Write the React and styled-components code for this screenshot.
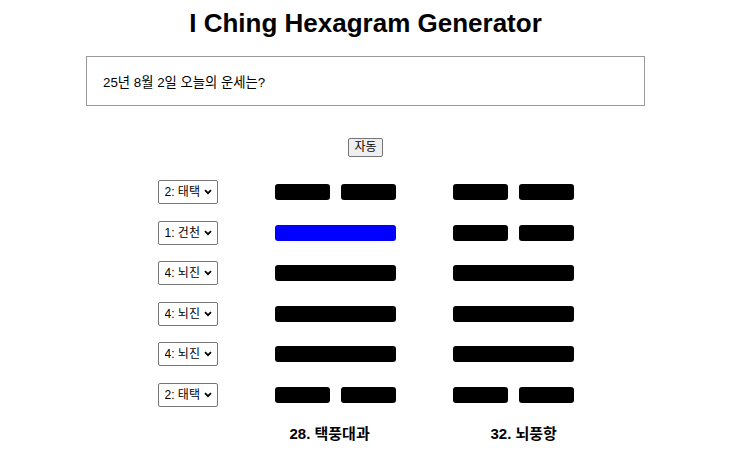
import React, { useState } from "react";
import styled, { createGlobalStyle } from "styled-components";

const GlobalStyle = createGlobalStyle`
  html, body { margin: 0; padding: 0; background: #fff; }
  body { font-family: "Liberation Sans", Arial, "Noto Sans CJK KR", sans-serif; color: #000; }
`;

const Page = styled.div`
  width: 731px;
  display: flex;
  flex-direction: column;
  align-items: center;
`;

const Title = styled.h1`
  margin: 8px 0 0;
  font-size: 26px;
  line-height: 30px;
  font-weight: bold;
`;

const Question = styled.input`
  box-sizing: border-box;
  margin-top: 18px;
  width: 559px;
  height: 50px;
  padding: 0 16px;
  border: 1px solid #9a9a9a;
  border-radius: 0;
  font-family: "Liberation Sans", Arial, "Noto Sans CJK KR", sans-serif;
  font-size: 13.33px;
  color: #000;
  outline: none;
`;

const AutoButton = styled.button`
  margin-top: 32px;
  height: 19px;
  padding: 0 5px;
  border: 1px solid #767676;
  border-radius: 2px;
  background: #efefef;
  font-family: "Liberation Sans", Arial, "Noto Sans CJK KR", sans-serif;
  font-size: 12px;
  color: #000;
  line-height: 17px;
`;

const Board = styled.div`
  margin-top: 15px;
  display: flex;
  gap: 57px;
  align-items: flex-start;
`;

const Column = styled.div`
  display: flex;
  flex-direction: column;
  align-items: center;
  width: ${(p) => p.$width}px;
`;

const Row = styled.div`
  height: 40.5px;
  width: 100%;
  display: flex;
  align-items: center;
  justify-content: center;
`;

const SelectWrap = styled.div`
  position: relative;
  width: 60px;
  height: 24px;
`;

const TrigramSelect = styled.select`
  box-sizing: border-box;
  appearance: none;
  -webkit-appearance: none;
  width: 60px;
  height: 24px;
  padding: 0 14px 0 6px;
  border: 1px solid #767676;
  border-radius: 2px;
  background: #fff;
  font-family: "Liberation Sans", Arial, "Noto Sans CJK KR", sans-serif;
  font-size: 12px;
  color: #000;
  outline: none;
`;

const Chevron = styled.svg`
  position: absolute;
  right: 6px;
  top: 9px;
  width: 8px;
  height: 6px;
  pointer-events: none;
`;

const Line = styled.div`
  width: 121px;
  height: 16px;
  display: flex;
  justify-content: space-between;
`;

const Segment = styled.div`
  flex: 0 0 ${(p) => (p.$full ? "100%" : "55px")};
  height: 100%;
  border-radius: 3px;
  background: ${(p) => (p.$active ? "#0000ff" : "#000")};
`;

const Name = styled.div`
  align-self: flex-start;
  margin: 9px 0 0 ${(p) => p.$indent}px;
  font-family: "Liberation Sans", Arial, "Noto Sans CJK KR", sans-serif;
  font-size: 15px;
  font-weight: bold;
  line-height: 20px;
  white-space: nowrap;
`;

const trigrams = ["1: 건천", "2: 태택", "3: 리화", "4: 뇌진", "5: 손풍", "6: 감수", "7: 간산", "8: 곤지"];

// lines listed top to bottom: true = yang (solid)
const left = [false, true, true, true, true, false];
const right = [false, false, true, true, true, false];

function HexLine({ yang, active }) {
  return (
    <Line>
      {yang ? (
        <Segment $full $active={active} />
      ) : (
        <>
          <Segment $active={active} />
          <Segment $active={active} />
        </>
      )}
    </Line>
  );
}

export default function App() {
  const [values, setValues] = useState(["2: 태택", "1: 건천", "4: 뇌진", "4: 뇌진", "4: 뇌진", "2: 태택"]);
  return (
    <Page>
      <GlobalStyle />
      <Title>I Ching Hexagram Generator</Title>
      <Question defaultValue="25년 8월 2일 오늘의 운세는?" />
      <AutoButton>자동</AutoButton>
      <Board>
        <Column $width={60}>
          {values.map((v, i) => (
            <Row key={i}>
              <SelectWrap>
                <TrigramSelect
                  value={v}
                  onChange={(e) => {
                    const n = [...values];
                    n[i] = e.target.value;
                    setValues(n);
                  }}
                >
                  {trigrams.map((t) => (
                    <option key={t} value={t}>
                      {t}
                    </option>
                  ))}
                </TrigramSelect>
                <Chevron viewBox="0 0 8 6">
                  <path d="M1 1.2 L4 4.2 L7 1.2" fill="none" stroke="#000" strokeWidth="1.8" />
                </Chevron>
              </SelectWrap>
            </Row>
          ))}
        </Column>
        <Column $width={121}>
          {left.map((y, i) => (
            <Row key={i}>
              <HexLine yang={y} active={i === 1} />
            </Row>
          ))}
          <Name $indent={15}>28. 택풍대과</Name>
        </Column>
        <Column $width={121}>
          {right.map((y, i) => (
            <Row key={i}>
              <HexLine yang={y} />
            </Row>
          ))}
          <Name $indent={38}>32. 뇌풍항</Name>
        </Column>
      </Board>
    </Page>
  );
}
